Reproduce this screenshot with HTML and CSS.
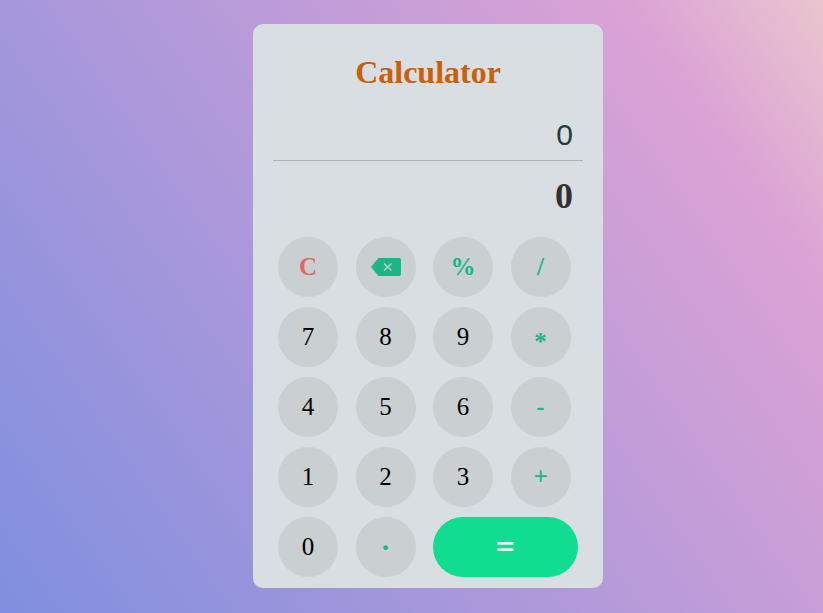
FILE: index.html
```
<!DOCTYPE html>
<html lang="en">
<head>
<meta charset="utf-8">
<title>Calculator</title>
<link rel="stylesheet" href="styles.css">
</head>
<body>
<main class="calculator">
  <h1 class="title">Calculator</h1>
  <input class="expression" type="text" value="0" aria-label="Expression">
  <output class="result" aria-label="Result">0</output>
  <div class="keys">
    <button class="key clear" type="button">C</button>
    <button class="key operator" type="button" aria-label="Backspace">
      <svg class="backspace" viewBox="0 0 30 18" aria-hidden="true">
        <path d="M7.500 0H28Q30 0 30 2V16Q30 18 28 18H7.500L0 9Z" fill="currentColor"/>
        <path d="M13 5.500L20.500 12.500M20.500 5.500L13 12.500" fill="none" stroke="#cacfd2" stroke-width="1.300"/>
      </svg>
    </button>
    <button class="key operator" type="button">%</button>
    <button class="key operator" type="button">/</button>
    <button class="key" type="button">7</button>
    <button class="key" type="button">8</button>
    <button class="key" type="button">9</button>
    <button class="key operator multiply" type="button">*</button>
    <button class="key" type="button">4</button>
    <button class="key" type="button">5</button>
    <button class="key" type="button">6</button>
    <button class="key operator" type="button">-</button>
    <button class="key" type="button">1</button>
    <button class="key" type="button">2</button>
    <button class="key" type="button">3</button>
    <button class="key operator" type="button">+</button>
    <button class="key" type="button">0</button>
    <button class="key operator point" type="button">·</button>
    <button class="key equals" type="button">=</button>
  </div>
</main>
</body>
</html>
```
FILE: styles.css
```
* {
  box-sizing: border-box;
}

body {
  margin: 0;
  min-height: 100vh;
  padding: 24px 0 24px 33px;
  background: linear-gradient(55deg, #7f8fdf, #dba2d5 84%, #eac6ce);
  font-family: "Liberation Serif", serif;
}

.calculator {
  max-width: 350px;
  margin: 0 auto;
  padding: 30px 20px 6px;
  border-radius: 10px;
  background: #d9dee2;
}

.title {
  margin: 0;
  color: #cb6009;
  font-size: 32px;
  line-height: 36px;
  text-align: center;
}

.expression,
.result {
  display: block;
  width: 100%;
  padding: 0 10px;
  text-align: right;
}

.expression {
  height: 51px;
  margin-top: 20px;
  border: 0;
  border-bottom: 1px solid #b5adaf;
  outline: 0;
  background: transparent;
  color: #1f3c40;
  font-family: "Liberation Sans", sans-serif;
  font-size: 30px;
}

.result {
  color: #362f31;
  font-size: 36px;
  font-weight: bold;
  line-height: 71px;
}

.keys {
  display: grid;
  grid-template-columns: repeat(4, 1fr);
}

.key {
  width: 60px;
  height: 60px;
  margin: 5px;
  padding: 0;
  border: 0;
  border-radius: 30px;
  background: #cacfd2;
  color: #000;
  font-family: inherit;
  font-size: 25px;
}

.clear,
.operator {
  font-weight: bold;
}

.clear {
  color: #e36465;
}

.operator {
  color: #1bb683;
}

/* The asterisk glyph sits high in its line, so it is pushed to the middle. */
.multiply {
  padding-top: 10px;
}

.point {
  font-size: 30px;
}

.backspace {
  display: block;
  width: 30px;
  height: 18px;
  margin: 0 auto;
}

.equals {
  grid-column: span 2;
  width: auto;
  background: #11dd90;
  color: #fff;
  font-size: 34px;
  font-weight: bold;
}
```
